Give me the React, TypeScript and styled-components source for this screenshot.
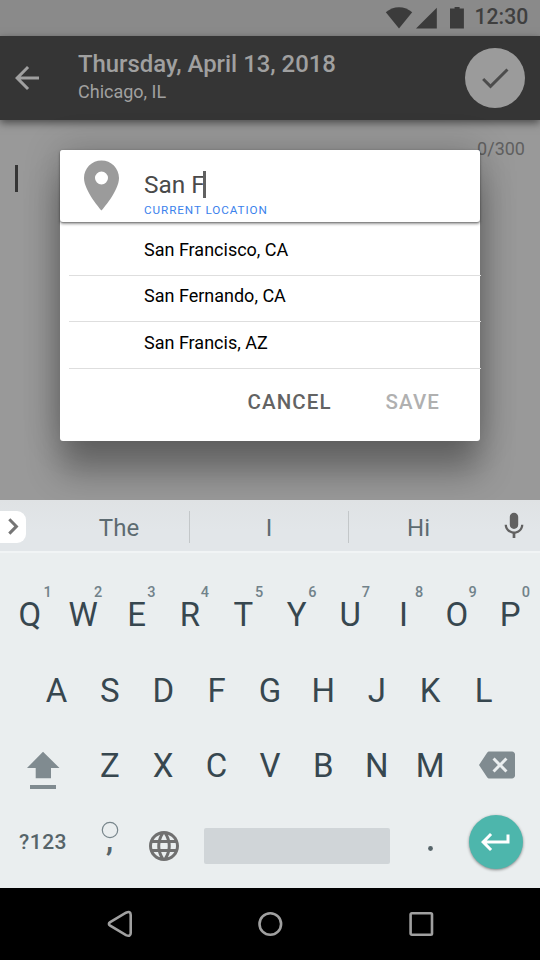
import React from "react";
import styled, { createGlobalStyle } from "styled-components";

const GlobalStyle = createGlobalStyle`
  * { box-sizing: border-box; }
  body { margin: 0; font-family: Roboto, sans-serif; }
  svg { display: block; flex: none; }
`;

const Screen = styled.div`
  position: relative;
  width: 540px;
  height: 960px;
  overflow: hidden;
  display: flex;
  flex-direction: column;
  background: #999;
`;

const StatusBar = styled.div`
  height: 36px;
  flex: none;
  display: flex;
  align-items: center;
  justify-content: flex-end;
  padding-right: 12px;
  background: #8a8a8a;
  color: #3f3f3f;
`;

const Clock = styled.span`
  width: 54px;
  margin-left: 9px;
  padding-left: 0.5px;
  font-size: 21.2px;
  line-height: 34px;
  height: 36px;
  font-weight: 500;
`;

const AppBar = styled.header`
  position: relative;
  height: 84px;
  flex: none;
  display: flex;
  align-items: center;
  padding: 0 15px 0 9px;
  background: #353535;
  box-shadow: 0 3px 8px rgba(0, 0, 0, 0.5);
`;

const Heading = styled.div`
  flex: 1;
  height: 84px;
  padding: 14px 0 0 33px;
  color: #a0a0a0;
`;

const Title = styled.div`
  font-size: 23.9px;
  line-height: 28px;
  font-weight: 500;
`;

const Subtitle = styled.div`
  font-size: 18px;
  line-height: 28px;
`;

const ConfirmButton = styled.div`
  width: 60px;
  height: 60px;
  border-radius: 50%;
  display: grid;
  place-items: center;
  background: #9b9b9b;
`;

const Editor = styled.main`
  height: 380px;
  flex: none;
  display: flex;
  justify-content: space-between;
  padding: 16px 15px 0;
`;

const EditorCaret = styled.div`
  width: 3px;
  height: 27px;
  margin-top: 29px;
  background: #353535;
`;

const Counter = styled.div`
  font-size: 18px;
  line-height: 26px;
  color: #606060;
`;

const Dialog = styled.section`
  position: absolute;
  left: 60px;
  top: 150px;
  width: 420px;
  height: 291px;
  border-radius: 3px;
  background: #fff;
  box-shadow: 0 32px 34px rgba(0, 0, 0, 0.3), 0 0 36px rgba(0, 0, 0, 0.22);
`;

const SearchField = styled.div`
  height: 72px;
  display: flex;
  padding: 10px 0 0 24px;
  border-radius: 3px;
  background: #fff;
  box-shadow: 0 1.5px 3px rgba(0, 0, 0, 0.4), 0 1px 1px rgba(0, 0, 0, 0.2);
`;

const FieldText = styled.div`
  margin-left: 25px;
  padding-top: 9px;
`;

const FieldValue = styled.div`
  display: flex;
  font-size: 24.4px;
  line-height: 32px;
  height: 34px;
  color: #4a4a4a;
`;

const FieldCaret = styled.span`
  width: 3px;
  height: 27px;
  margin: 2px 0 0 -2px;
  background: #616161;
`;

const FieldHint = styled.div`
  font-size: 11.7px;
  line-height: 14px;
  letter-spacing: 0.92px;
  color: #3b82ec;
`;

const Results = styled.div`
  width: 412px;
  margin-left: 9px;
  padding-top: 7px;
`;

const Result = styled.div`
  height: 46.5px;
  padding: 1.5px 0 0 75px;
  font-size: 18px;
  line-height: 38px;
  color: #000;
  border-bottom: 1.5px solid #dedede;
`;

const Actions = styled.div`
  display: flex;
  justify-content: flex-end;
  gap: 54px;
  padding: 19px 40px 0 0;
`;

const Action = styled.span<{ $disabled?: boolean }>`
  font-size: 20.5px;
  line-height: 29px;
  font-weight: 500;
  letter-spacing: 1.1px;
  color: ${(p) => (p.$disabled ? "#b0b0b0" : "#636363")};
`;

const Keyboard = styled.div`
  position: relative;
  height: 388px;
  flex: none;
  background: #eaeeef;
`;

const Suggestions = styled.div`
  height: 53px;
  display: grid;
  grid-template-columns: 49px 141px 159px 139px 52px;
  padding-top: 1px;
  background: linear-gradient(#dfe2e4, #e2e6e9 60%);
  border-bottom: 2px solid #f1f4f5;
`;

const ExpandTab = styled.div`
  width: 26px;
  height: 32px;
  margin-top: 9.5px;
  padding-left: 8px;
  display: flex;
  align-items: center;
  background: #fff;
  border-radius: 0 9px 9px 0;
`;

const Suggestion = styled.div<{ $divided?: boolean }>`
  height: 32px;
  margin-top: 10px;
  text-align: center;
  font-size: 24px;
  line-height: 34px;
  color: #5d6b71;
  border-right: ${(p) => (p.$divided ? "1.5px solid #c3c7c9" : "none")};
`;

const MicSlot = styled.div`
  display: flex;
  justify-content: center;
  padding-top: 9px;
`;

const Rows = styled.div`
  padding: 24px 3px 0;
`;

const Row = styled.div<{ $height: number }>`
  height: ${(p) => p.$height}px;
  display: flex;
  justify-content: center;
`;

const Key = styled.div`
  position: relative;
  width: 53.4px;
  flex: none;
  height: 76px;
  text-align: center;
  font-size: 33px;
  line-height: 76px;
  color: #37474f;
`;

const KeyDigit = styled.span<{ $left: number }>`
  position: absolute;
  left: ${(p) => p.$left}px;
  top: 7px;
  font-size: 14.5px;
  line-height: 18px;
  font-weight: 500;
  color: #71828a;
`;

const WideKey = styled.div`
  width: 80px;
  flex: none;
  display: flex;
  justify-content: center;
`;

const BottomRow = styled.div`
  height: 85px;
  display: flex;
`;

const ModeKey = styled.div`
  width: 80px;
  flex: none;
  text-align: center;
  font-size: 21px;
  line-height: 78px;
  font-weight: 500;
  letter-spacing: 0.5px;
  color: #566469;
`;

const CommaKey = styled.div`
  width: 53px;
  flex: none;
  display: flex;
  flex-direction: column;
  align-items: center;
  padding-top: 18px;
`;

const Comma = styled.span`
  margin-top: -9px;
  font-size: 29px;
  line-height: 22px;
  font-weight: 700;
  color: #566469;
`;

const GlobeKey = styled.div`
  width: 54px;
  flex: none;
  padding: 25px 0 0 9.5px;
`;

const SpaceKey = styled.div`
  width: 186px;
  height: 36px;
  flex: none;
  margin: 25px 0 0 14px;
  border-radius: 2px;
  background: #d0d5d8;
`;

const PeriodKey = styled.div`
  width: 79px;
  flex: none;
  display: flex;
  justify-content: center;
  padding: 43px 0 0 2px;
`;

const EnterKey = styled.div`
  width: 54px;
  height: 54px;
  flex: none;
  margin-top: 11.5px;
  border-radius: 50%;
  display: grid;
  place-items: center;
  background: #4db6ac;
  box-shadow: 0 1px 3px rgba(0, 0, 0, 0.45);
`;

const NavBar = styled.nav`
  height: 72px;
  flex: none;
  display: flex;
  align-items: center;
  justify-content: space-between;
  padding: 0 106px 0 107px;
  background: #000;
`;

const Glyph = ({ d, size = 36, color }: { d: string; size?: number; color: string }) => (
  <svg width={size} height={size} viewBox="0 0 24 24" fill={color}>
    <path d={d} />
  </svg>
);

const paths = {
  back: "M20 11H7.83l5.59-5.59L12 4l-8 8 8 8 1.41-1.41L7.83 13H20v-2z",
  done: "M9 16.2L4.8 12l-1.4 1.4L9 19 21 7l-1.4-1.4L9 16.2z",
  mic: "M12 14.3c1.75 0 3.15-1.4 3.15-3.15v-6C15.15 3.4 13.75 2 12 2S8.85 3.4 8.85 5.15v6c0 1.75 1.4 3.15 3.15 3.15zm5.3-3.3c0 3-2.54 5.1-5.3 5.1S6.7 14 6.7 11H5c0 3.41 2.72 6.23 6 6.72V21h2v-3.28c3.28-.48 6-3.3 6-6.72h-1.7z",
  backspace:
    "M22 3H7c-.69 0-1.23.35-1.59.88L0 12l5.41 8.11c.36.53.9.89 1.59.89h15c1.1 0 2-.9 2-2V5c0-1.1-.9-2-2-2zm-3 12.59L17.59 17 14 13.41 10.41 17 9 15.59 12.59 12 9 8.41 10.41 7 14 10.59 17.59 7 19 8.41 15.41 12 19 15.59z",
  globe:
    "M11.99 2C6.47 2 2 6.48 2 12s4.47 10 9.99 10C17.52 22 22 17.52 22 12S17.52 2 11.99 2zm6.93 6h-2.95c-.32-1.25-.78-2.45-1.38-3.56 1.84.63 3.37 1.91 4.33 3.56zM12 4.04c.83 1.2 1.48 2.53 1.91 3.96h-3.82c.43-1.43 1.08-2.76 1.91-3.96zM4.26 14C4.1 13.36 4 12.69 4 12s.1-1.36.26-2h3.38c-.08.66-.14 1.32-.14 2s.06 1.34.14 2H4.26zm.82 2h2.95c.32 1.25.78 2.45 1.38 3.56-1.84-.63-3.37-1.9-4.33-3.56zm2.95-8H5.08c.96-1.66 2.49-2.93 4.33-3.56C8.81 5.55 8.35 6.75 8.03 8zM12 19.96c-.83-1.2-1.48-2.53-1.91-3.96h3.82c-.43 1.43-1.08 2.76-1.91 3.96zM14.34 14H9.66c-.09-.66-.16-1.32-.16-2s.07-1.35.16-2h4.68c.09.65.16 1.32.16 2s-.07 1.34-.16 2zm.25 5.56c.6-1.11 1.06-2.31 1.38-3.56h2.95c-.96 1.65-2.49 2.93-4.33 3.56zM16.36 14c.08-.66.14-1.32.14-2s-.06-1.34-.14-2h3.38c.16.64.26 1.31.26 2s-.1 1.36-.26 2h-3.38z",
  enter: "M19 7v4H5.83l3.58-3.59L8 6l-6 6 6 6 1.41-1.41L5.83 13H21V7z",
};

const StatusIcons = () => (
  <svg width="80" height="36" viewBox="385 0 80 36" fill="#3b3b3b">
    <path d="M399 28.5 385.8 12.3C389.5 9 394 7.2 399 7.2s9.5 1.8 13.2 5.1z" />
    <path d="M416 28.6 436.8 7.8v20.8z" />
    <path d="M450 8.6h4.6V7h5v1.6h4.3v20H450z" />
  </svg>
);

const topKeys = "QWERTYUIOP".split("");
const digits = "1234567890".split("");
const homeKeys = "ASDFGHJKL".split("");
const lowKeys = "ZXCVBNM".split("");
const places = ["San Francisco, CA", "San Fernando, CA", "San Francis, AZ"];

export default function App() {
  return (
    <>
      <GlobalStyle />
      <Screen>
        <StatusBar>
          <StatusIcons />
          <Clock>12:30</Clock>
        </StatusBar>
        <AppBar>
          <Glyph d={paths.back} color="#a0a0a0" />
          <Heading>
            <Title>Thursday, April 13, 2018</Title>
            <Subtitle>Chicago, IL</Subtitle>
          </Heading>
          <ConfirmButton>
            <Glyph d={paths.done} color="#4c4c4c" />
          </ConfirmButton>
        </AppBar>
        <Editor>
          <EditorCaret />
          <Counter>0/300</Counter>
        </Editor>
        <Dialog>
          <SearchField>
            <svg width="35" height="51" viewBox="5 1.8 14 20.4" fill="#9b9b9b">
              <path d="M12 2C8.13 2 5 5.13 5 9c0 5.25 7 13 7 13s7-7.75 7-13c0-3.87-3.13-7-7-7zm0 9.6a2.6 2.6 0 0 1 0-5.2 2.6 2.6 0 0 1 0 5.2z" />
            </svg>
            <FieldText>
              <FieldValue>
                San F<FieldCaret />
              </FieldValue>
              <FieldHint>CURRENT LOCATION</FieldHint>
            </FieldText>
          </SearchField>
          <Results>
            {places.map((p) => (
              <Result key={p}>{p}</Result>
            ))}
          </Results>
          <Actions>
            <Action>CANCEL</Action>
            <Action $disabled>SAVE</Action>
          </Actions>
        </Dialog>
        <Keyboard>
          <Suggestions>
            <ExpandTab>
              <svg width="11" height="17" viewBox="0 0 11 17" fill="none" stroke="#757575" strokeWidth="3">
                <path d="M1.3 1.2 8.4 8.4 1.3 15.6" />
              </svg>
            </ExpandTab>
            <Suggestion $divided>The</Suggestion>
            <Suggestion $divided>I</Suggestion>
            <Suggestion>Hi</Suggestion>
            <MicSlot>
              <Glyph d={paths.mic} size={32} color="#616161" />
            </MicSlot>
          </Suggestions>
          <Rows>
            <Row $height={76}>
              {topKeys.map((k, i) => (
                <Key key={k}>
                  {k}
                  <KeyDigit $left={i === 0 ? 40.5 : i < 4 ? 37.5 : 38.3}>{digits[i]}</KeyDigit>
                </Key>
              ))}
            </Row>
            <Row $height={75}>
              {homeKeys.map((k) => (
                <Key key={k}>{k}</Key>
              ))}
            </Row>
            <Row $height={75}>
              <WideKey>
                <svg width="34" height="76" viewBox="26 728 34 76" fill="#808b90">
                  <path d="M43 751.8 59.5 768H51v10.2H35.7V768H27zM30 785h26v4H30z" />
                </svg>
              </WideKey>
              {lowKeys.map((k) => (
                <Key key={k}>{k}</Key>
              ))}
              <WideKey>
                <svg width="36" height="74" viewBox="0 -12.67 24 49.33" fill="#808b90">
                  <path d={paths.backspace} />
                </svg>
              </WideKey>
            </Row>
            <BottomRow>
              <ModeKey>?123</ModeKey>
              <CommaKey>
                <svg width="18" height="18" viewBox="0 0 18 18" fill="none" stroke="#78868c" strokeWidth="1.2">
                  <circle cx="9" cy="9" r="7.7" />
                </svg>
                <Comma>,</Comma>
              </CommaKey>
              <GlobeKey>
                <Glyph d={paths.globe} color="#707070" />
              </GlobeKey>
              <SpaceKey />
              <PeriodKey>
                <svg width="5" height="5" viewBox="0 0 5 5" fill="#566469">
                  <circle cx="2.5" cy="2.5" r="2.4" />
                </svg>
              </PeriodKey>
              <EnterKey>
                <Glyph d={paths.enter} color="#fff" />
              </EnterKey>
            </BottomRow>
          </Rows>
        </Keyboard>
        <NavBar>
          <svg width="26" height="30" viewBox="0 0 26 30" fill="none" stroke="#a0a0a0" strokeWidth="2.6">
            <path d="M3.2 13.1 19 3.7q4.7-2 4.7 2.2v18q0 4.2-4.7 2.2L3.2 16.7q-2.6-1.8 0-3.6z" />
          </svg>
          <svg width="26" height="26" viewBox="0 0 26 26" fill="none" stroke="#a0a0a0" strokeWidth="2.6">
            <circle cx="12.3" cy="13" r="10.8" />
          </svg>
          <svg width="26" height="26" viewBox="0 0 26 26" fill="none" stroke="#a0a0a0" strokeWidth="2.6">
            <rect x="2.6" y="2.3" width="21.4" height="21.4" rx="1.2" />
          </svg>
        </NavBar>
      </Screen>
    </>
  );
}
